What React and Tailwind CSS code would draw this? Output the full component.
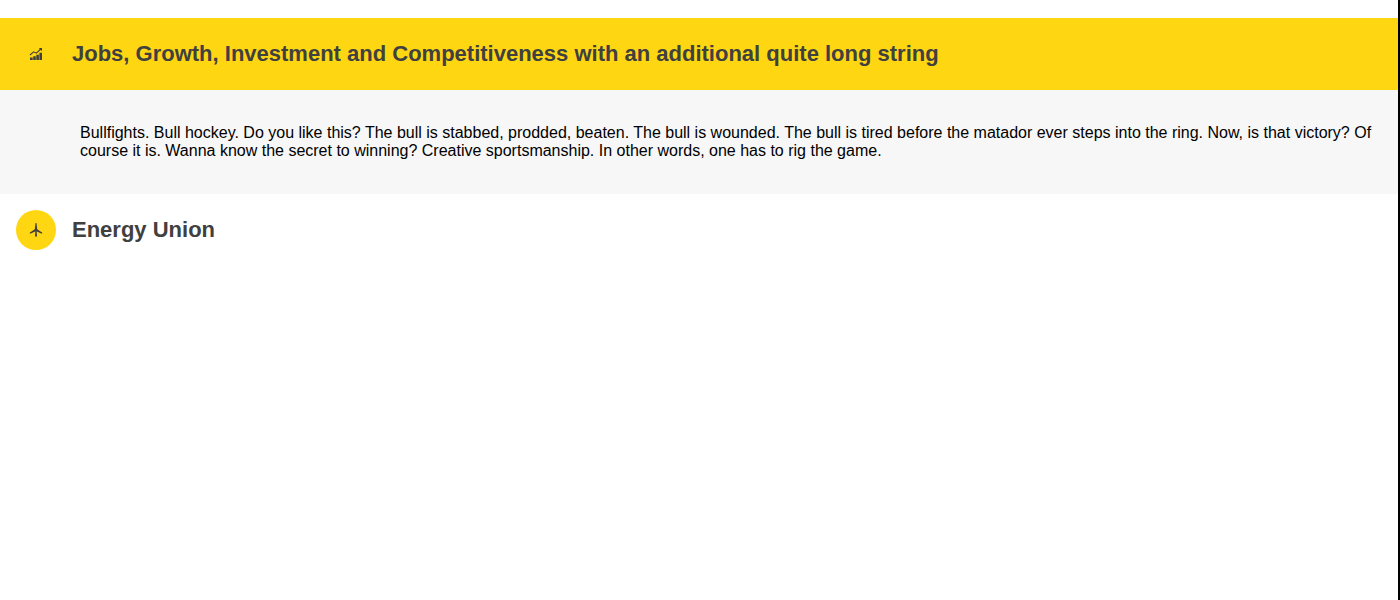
import { useState } from "react";

function GrowthIcon() {
  return (
    <svg viewBox="0 0 16 16" className="size-4" fill="currentColor" aria-hidden="true">
      <path d="M2 11.4h2.7V14H2zM5.2 10.2h2.6V14H5.2zM8.3 8.8h2.6V14H8.3zM11.4 6.8H14V14h-2.6z" />
      <path d="M2 9l3.6-3.2 2.8 1.4L12.8 3" fill="none" stroke="currentColor" strokeWidth="1.1" />
      <path d="M10.8 2H14v3.2z" />
    </svg>
  );
}

function TurbineIcon() {
  return (
    <svg viewBox="0 0 16 16" className="size-4" fill="currentColor" aria-hidden="true">
      <path d="M7.5 1h1l.8 6.8H6.8zM7.2 6.9l1 2-6 2.8-.6-1zM8.8 6.9l-1 2 6 2.8.6-1zM7.3 9.6h1.4l.3 5H7z" />
      <circle cx="8" cy="8" r="1.5" />
    </svg>
  );
}

const items = [
  {
    id: "jobs",
    title: "Jobs, Growth, Investment and Competitiveness with an additional quite long string",
    Icon: GrowthIcon,
    body: "Bullfights. Bull hockey. Do you like this? The bull is stabbed, prodded, beaten. The bull is wounded. The bull is tired before the matador ever steps into the ring. Now, is that victory? Of course it is. Wanna know the secret to winning? Creative sportsmanship. In other words, one has to rig the game.",
  },
  {
    id: "energy",
    title: "Energy Union",
    Icon: TurbineIcon,
    body: "Secure, affordable and clean energy.",
  },
];

export default function App() {
  const [openId, setOpenId] = useState("jobs");

  return (
    <main className="min-h-screen border-r-2 border-black bg-white pt-[18px] font-['Liberation_Sans',Arial,sans-serif] text-black">
      {items.map(({ id, title, Icon, body }) => {
        const open = openId === id;
        return (
          <section key={id}>
            <h2>
              <button
                type="button"
                aria-expanded={open}
                aria-controls={`${id}-panel`}
                onClick={() => setOpenId(open ? null : id)}
                className={`flex w-full items-center gap-4 p-4 text-left text-[22px] leading-6 font-bold text-[#404040] ${
                  open ? "bg-[#ffd612]" : "bg-white"
                }`}
              >
                <span className="flex size-10 shrink-0 items-center justify-center rounded-full bg-[#ffd612]">
                  <Icon />
                </span>
                <span>{title}</span>
              </button>
            </h2>
            {open && (
              <div id={`${id}-panel`} className="bg-[#f7f7f7] py-[34px] pr-6 pl-20 text-base leading-[18px]">
                <p>{body}</p>
              </div>
            )}
          </section>
        );
      })}
    </main>
  );
}
